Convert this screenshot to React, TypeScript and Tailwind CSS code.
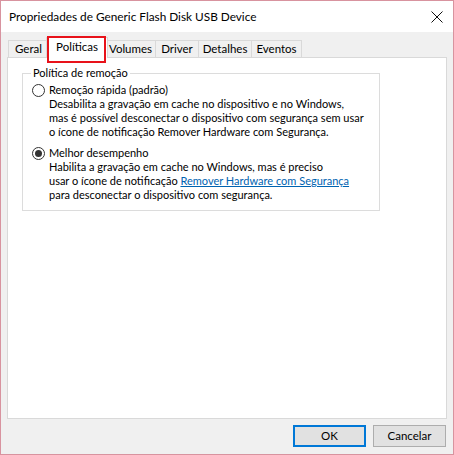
import React from "react";

const font = { fontFamily: 'Lato, "Noto Sans", sans-serif' };

function Radio({ checked }: { checked?: boolean }) {
  return (
    <span className="w-[13px] h-[13px] rounded-full border border-[#333333] bg-white flex items-center justify-center shrink-0">
      {checked && <span className="w-[7px] h-[7px] rounded-full bg-[#333333]" />}
    </span>
  );
}

type Tab = { label: string; w: string; ml: string };

export default function App() {
  const tabs: Tab[] = [
    { label: "Geral", w: "w-[41px]", ml: "ml-[1px]" },
    { label: "Políticas", w: "w-[62px]", ml: "-ml-[3px]" },
    { label: "Volumes", w: "w-[51px]", ml: "-ml-[3px]" },
    { label: "Driver", w: "w-[44px]", ml: "-ml-[1px]" },
    { label: "Detalhes", w: "w-[54px]", ml: "-ml-[1px]" },
    { label: "Eventos", w: "w-[51px]", ml: "-ml-[1px]" },
  ];
  return (
    <div
      className="w-[454px] h-[455px] flex flex-col border border-[#d8939f] bg-[#f0f0f0] text-[11.5px] text-black leading-[14px] whitespace-nowrap"
      style={font}
    >
      <div className="h-[31px] bg-white flex items-center justify-between pl-[8px] pr-[8px] shrink-0">
        <span className="text-[11.8px]">Propriedades de Generic Flash Disk USB Device</span>
        <svg width="14" height="14" viewBox="0 0 14 14" className="mr-[1px]">
          <path d="M1.5 1.5 L12.5 12.5 M12.5 1.5 L1.5 12.5" stroke="#111" strokeWidth="1" />
        </svg>
      </div>
      <div className="flex-1 flex flex-col px-[6px] pt-[5px]">
        <div className="flex items-end h-[20px]">
          {tabs.map((t, i) =>
            i === 1 ? (
              <div
                key={t.label}
                className={`relative h-[21px] -mb-[1px] ${t.w} ${t.ml} bg-white border border-b-0 border-[#d9d9d9] flex justify-center items-start pt-[2px] z-10`}
              >
                <span>{t.label}</span>
                <span className="absolute left-0 -top-[2px] right-[1px] -bottom-[5px] border-2 border-[#e8121a] pointer-events-none" />
              </div>
            ) : (
              <div
                key={t.label}
                className={`h-[17px] ${t.w} ${t.ml} bg-[#f0f0f0] border border-b-0 border-[#d9d9d9] flex justify-center items-center`}
              >
                {t.label}
              </div>
            )
          )}
        </div>
        <div className="h-[362px] bg-white border border-[#d9d9d9] pt-[8px] pl-[14px]">
          <fieldset className="w-[358px] min-w-0 border border-[#dcdcdc] pl-[9px] pb-[8px] pt-[3px] text-[11px]">
            <legend className="px-[2px] -ml-[1px]">Política de remoção</legend>
            <div className="flex items-center gap-[4px] h-[14px]">
              <Radio />
              <span>Remoção rápida (padrão)</span>
            </div>
            <div className="pl-[17px]">
              <p>Desabilita a gravação em cache no dispositivo e no Windows,</p>
              <p>mas é possível desconectar o dispositivo com segurança sem usar</p>
              <p>o ícone de notificação Remover Hardware com Segurança.</p>
            </div>
            <div className="flex items-center gap-[4px] h-[14px] mt-[7px]">
              <Radio checked />
              <span>Melhor desempenho</span>
            </div>
            <div className="pl-[17px]">
              <p>Habilita a gravação em cache no Windows, mas é preciso</p>
              <p>
                usar o ícone de notificação{" "}
                <span className="text-[#0063b1] underline">Remover Hardware com Segurança</span>
              </p>
              <p>para desconectar o dispositivo com segurança.</p>
            </div>
          </fieldset>
        </div>
        <div className="flex justify-end gap-[7px] mt-[6px] pr-[1px]">
          <button className="w-[73px] h-[22px] bg-[#e1e1e1] border-2 border-[#0078d7] text-[11.5px]">OK</button>
          <button className="w-[73px] h-[22px] bg-[#e1e1e1] border border-[#adadad] text-[11.5px]">Cancelar</button>
        </div>
      </div>
    </div>
  );
}
